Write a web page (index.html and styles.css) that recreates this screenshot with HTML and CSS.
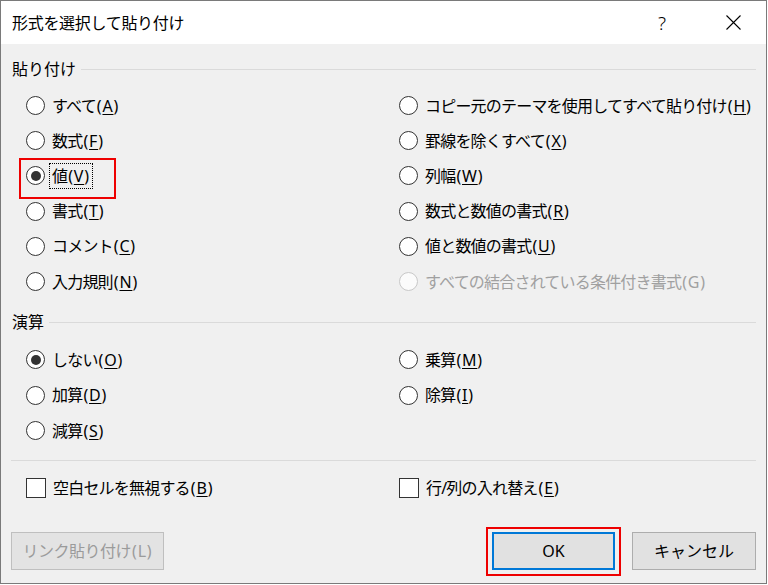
FILE: index.html
```html
<!DOCTYPE html>
<html lang="ja">

<head>
    <meta charset="UTF-8">
    <meta name="viewport" content="width=device-width, initial-scale=1.0">
    <title>形式を選択して貼り付け</title>
    <link rel="stylesheet" href="styles.css">
</head>

<body>
    <div class="dialog">
        <div class="titlebar">
            <span class="title">形式を選択して貼り付け</span>
            <span class="help">?</span>
            <span class="close">
                <svg width="15" height="15" viewBox="0 0 15 15">
                    <path d="M0.5 0.5 L14.5 14.5 M14.5 0.5 L0.5 14.5" stroke="#000" stroke-width="1.1" fill="none" />
                </svg>
            </span>
        </div>
        <div class="body">
            <div class="group_head"><span>貼り付け</span></div>
            <div class="options paste">
                <label class="option"><span class="radio"></span><span class="text">すべて<span class="key">(<u>A</u>)</span></span></label>
                <label class="option"><span class="radio"></span><span class="text">コピー元のテーマを使用してすべて貼り付け<span class="key">(<u>H</u>)</span></span></label>
                <label class="option"><span class="radio"></span><span class="text">数式<span class="key">(<u>F</u>)</span></span></label>
                <label class="option"><span class="radio"></span><span class="text">罫線を除くすべて<span class="key">(<u>X</u>)</span></span></label>
                <label class="option marked"><span class="radio checked"></span><span class="text focus">値<span class="key">(<u>V</u>)</span></span></label>
                <label class="option"><span class="radio"></span><span class="text">列幅<span class="key">(<u>W</u>)</span></span></label>
                <label class="option"><span class="radio"></span><span class="text">書式<span class="key">(<u>T</u>)</span></span></label>
                <label class="option"><span class="radio"></span><span class="text">数式と数値の書式<span class="key">(<u>R</u>)</span></span></label>
                <label class="option"><span class="radio"></span><span class="text">コメント<span class="key">(<u>C</u>)</span></span></label>
                <label class="option"><span class="radio"></span><span class="text">値と数値の書式<span class="key">(<u>U</u>)</span></span></label>
                <label class="option"><span class="radio"></span><span class="text">入力規則<span class="key">(<u>N</u>)</span></span></label>
                <label class="option disabled"><span class="radio"></span><span class="text">すべての結合されている条件付き書式<span class="key">(G)</span></span></label>
            </div>

            <div class="group_head calc"><span>演算</span></div>
            <div class="options operation">
                <label class="option"><span class="radio checked"></span><span class="text">しない<span class="key">(<u>O</u>)</span></span></label>
                <label class="option"><span class="radio"></span><span class="text">乗算<span class="key">(<u>M</u>)</span></span></label>
                <label class="option"><span class="radio"></span><span class="text">加算<span class="key">(<u>D</u>)</span></span></label>
                <label class="option"><span class="radio"></span><span class="text">除算<span class="key">(<u>I</u>)</span></span></label>
                <label class="option"><span class="radio"></span><span class="text">減算<span class="key">(<u>S</u>)</span></span></label>
            </div>

            <div class="separator"></div>

            <div class="options checks">
                <label class="option"><span class="checkbox"></span><span class="text">空白セルを無視する<span class="key">(<u>B</u>)</span></span></label>
                <label class="option"><span class="checkbox"></span><span class="text">行/列の入れ替え<span class="key">(<u>E</u>)</span></span></label>
            </div>

            <div class="buttons">
                <button class="btn link" disabled>リンク貼り付け<span class="key">(L)</span></button>
                <span class="ok_wrap"><button class="btn ok">OK</button></span>
                <button class="btn cancel">キャンセル</button>
            </div>
        </div>
    </div>
</body>

</html>
```

FILE: styles.css
```css
* {
    box-sizing: border-box;
}

body {
    margin: 0;
    font-family: "Noto Sans", "Noto Sans CJK JP", sans-serif;
    font-size: 16px;
    color: #000;
}

.dialog {
    width: 767px;
    height: 584px;
    border: 1px solid #7a7a7a;
    display: flex;
    flex-direction: column;
    background: #f0f0f0;
}

.titlebar {
    height: 43px;
    background: #fff;
    display: flex;
    align-items: center;
    padding: 0 18px 0 11px;
}

.title {
    flex: 1;
    line-height: 20px;
    letter-spacing: -0.3px;
}

.help {
    width: 30px;
    text-align: center;
    font-size: 19px;
    font-weight: 300;
    line-height: 20px;
    margin-right: 41px;
}

.close {
    width: 30px;
    display: flex;
    justify-content: center;
}

.body {
    flex: 1;
    padding: 15px 10px 0 10px;
    display: flex;
    flex-direction: column;
}

.group_head {
    display: flex;
    align-items: center;
    gap: 5px;
    height: 20px;
    line-height: 20px;
    padding-left: 1px;
}

.group_head::after {
    content: "";
    flex: 1;
    height: 1px;
    background: #dadada;
}

.group_head.calc {
    margin-top: 13px;
}

.options {
    display: grid;
    grid-template-columns: 373px 1fr;
    padding-left: 15px;
}

.paste {
    margin-top: 9px;
    grid-auto-rows: 35.2px;
}

.operation {
    margin-top: 10px;
    grid-auto-rows: 35.5px;
}

.checks {
    margin-top: 10px;
    grid-auto-rows: 34px;
}

.option {
    position: relative;
    display: flex;
    align-items: center;
    gap: 7px;
    line-height: 20px;
    white-space: nowrap;
}

.text {
    letter-spacing: -0.8px;
}

/* (A) などのアクセスキー部分 */
.key {
    letter-spacing: 0.8px;
    padding: 0 0 0 1px;
}

.option u {
    text-underline-offset: 2px;
}

.radio {
    width: 19px;
    height: 19px;
    border: 1px solid #333;
    border-radius: 50%;
    background: #fff;
    display: flex;
    align-items: center;
    justify-content: center;
}

.radio.checked::after {
    content: "";
    width: 10px;
    height: 10px;
    border-radius: 50%;
    background: #333;
}

.checkbox {
    width: 20px;
    height: 20px;
    border: 1px solid #333;
    background: #fff;
}

.focus {
    outline: 1px dotted #000;
    outline-offset: 2px;
}

/* 赤い枠 (注釈) */
.marked::after {
    content: "";
    position: absolute;
    left: -7px;
    top: 0;
    width: 93px;
    height: 37px;
    border: 2px solid #ee0000;
}

.disabled {
    color: #a0a0a0;
}

.disabled .radio {
    border-color: #c8c8c8;
    background: #fbfbfb;
}

.separator {
    height: 1px;
    background: #dadada;
    margin-top: 11px;
}

.buttons {
    margin-top: 27px;
    display: flex;
    align-items: center;
}

.btn {
    height: 38px;
    font-family: inherit;
    font-size: 16px;
    color: #000;
    background: #e1e1e1;
    border: 1px solid #adadad;
    padding: 0;
    line-height: 20px;
}

.link {
    width: 153px;
    color: #9b9b9b;
    background: #e3e3e3;
    border-color: #bfbfbf;
    margin-right: auto;
    letter-spacing: -0.5px;
}

.ok_wrap {
    position: relative;
    display: flex;
    margin-right: 17px;
}

.ok_wrap::after {
    content: "";
    position: absolute;
    left: -6px;
    right: -6px;
    top: -5px;
    bottom: -6px;
    border: 2px solid #ee0000;
}

.ok {
    width: 123px;
    border: 2px solid #0078d7;
}

.cancel {
    width: 124px;
}
```
